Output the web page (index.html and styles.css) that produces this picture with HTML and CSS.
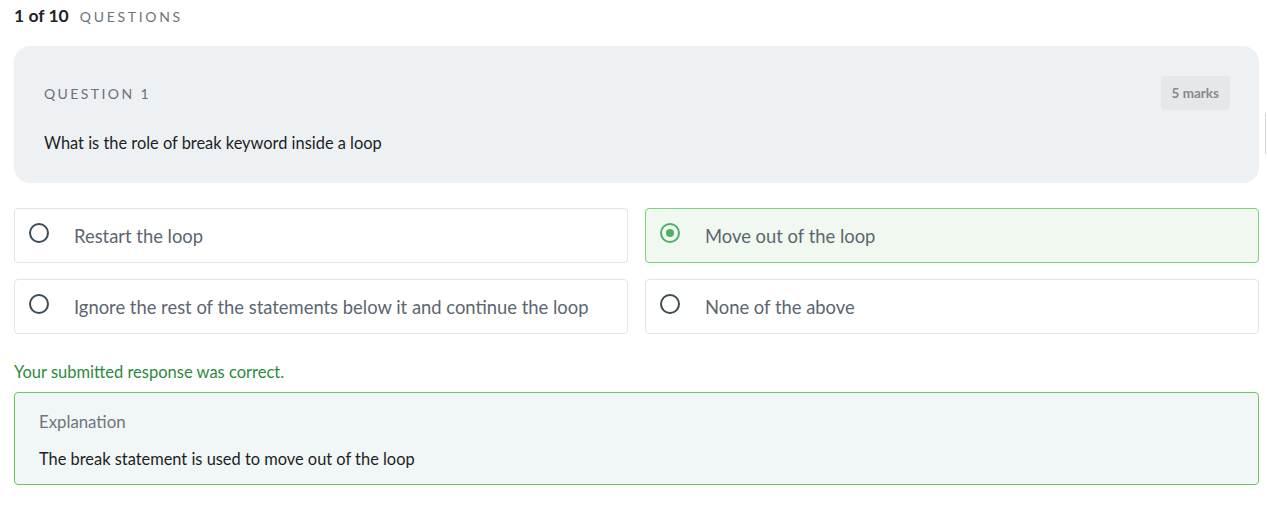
FILE: index.html
```html
<!DOCTYPE html>
<html>
<head>
<meta charset="utf-8">
<link rel="stylesheet" href="styles.css">
</head>
<body>
<div class="page">
  <div class="counter"><span class="count">1 of 10</span><span class="label">QUESTIONS</span></div>
  <div class="qcard">
    <div class="qhead">
      <span class="qnum">QUESTION 1</span>
      <span class="marks">5 marks</span>
    </div>
    <div class="qtext">What is the role of break keyword inside a loop</div>
  </div>
  <div class="options">
    <div class="opt"><span class="radio"></span><span class="otext">Restart the loop</span></div>
    <div class="opt selected"><span class="radio"></span><span class="otext">Move out of the loop</span></div>
    <div class="opt"><span class="radio"></span><span class="otext">Ignore the rest of the statements below it and continue the loop</span></div>
    <div class="opt"><span class="radio"></span><span class="otext">None of the above</span></div>
  </div>
  <div class="result">Your submitted response was correct.</div>
  <div class="explain">
    <div class="etitle">Explanation</div>
    <div class="etext">The break statement is used to move out of the loop</div>
  </div>
</div>
<div class="edge"></div>
</body>
</html>
```
FILE: styles.css
```css
html, body { margin: 0; padding: 0; background: #fff; }
body { font-family: "Lato", "Open Sans", sans-serif; color: #1d2228; }
.page { padding: 3px 8px 0 14px; display: flex; flex-direction: column; }
.counter { display: flex; align-items: baseline; gap: 11px; height: 26px; line-height: 26px; }
.count { font-size: 17.5px; font-weight: 700; color: #1e2329; }
.label { font-size: 14px; letter-spacing: 2.7px; color: #6d737a; }
.qcard { margin-top: 17px; background: #eef1f4; border-radius: 16px; padding: 30px 29px 30px 30px; }
.qhead { display: flex; justify-content: space-between; align-items: center; height: 34px; }
.qnum { font-size: 14px; letter-spacing: 2.4px; color: #6b7077; }
.marks { background: #e5e7e9; border-radius: 4px; font-size: 13.5px; font-weight: 700; color: #85898e; padding: 0 11px; height: 34px; line-height: 34px; }
.qtext { margin-top: 23px; font-size: 16.4px; color: #1b1f24; line-height: 20px; }
.options { margin-top: 25px; display: grid; grid-template-columns: 1fr 1fr; gap: 16px 17px; }
.opt { display: flex; align-items: center; height: 53px; border: 1px solid #e2e4e7; border-radius: 4px; padding: 0 14px; background: #fff; }
.opt.selected { background: #f1f8f0; border-color: #7ad27a; }
.radio { width: 16px; height: 16px; border: 2px solid #3d4a57; border-radius: 50%; box-sizing: content-box; flex: none; display: flex; align-items: center; justify-content: center; margin-top: -6px; }
.selected .radio { border-color: #4fae6a; }
.selected .radio::after { content: ""; width: 8px; height: 8px; border-radius: 50%; background: #4fae6a; }
.otext { margin-left: 25px; font-size: 18.4px; color: #5b6670; }
.result { margin-top: 28px; font-size: 16.5px; color: #2c8a3c; line-height: 20px; }
.explain { margin-top: 10px; border: 1px solid #6ac95b; border-radius: 4px; background: #f1f6f6; padding: 19px 24px 15px 24px; }
.etitle { font-size: 16.8px; color: #6f757b; line-height: 20px; }
.etext { margin-top: 17px; font-size: 16.4px; color: #1b1f24; line-height: 20px; }
.edge { position: absolute; left: 1265px; top: 113px; width: 1px; height: 41px; background: #cfd6de; }
```
